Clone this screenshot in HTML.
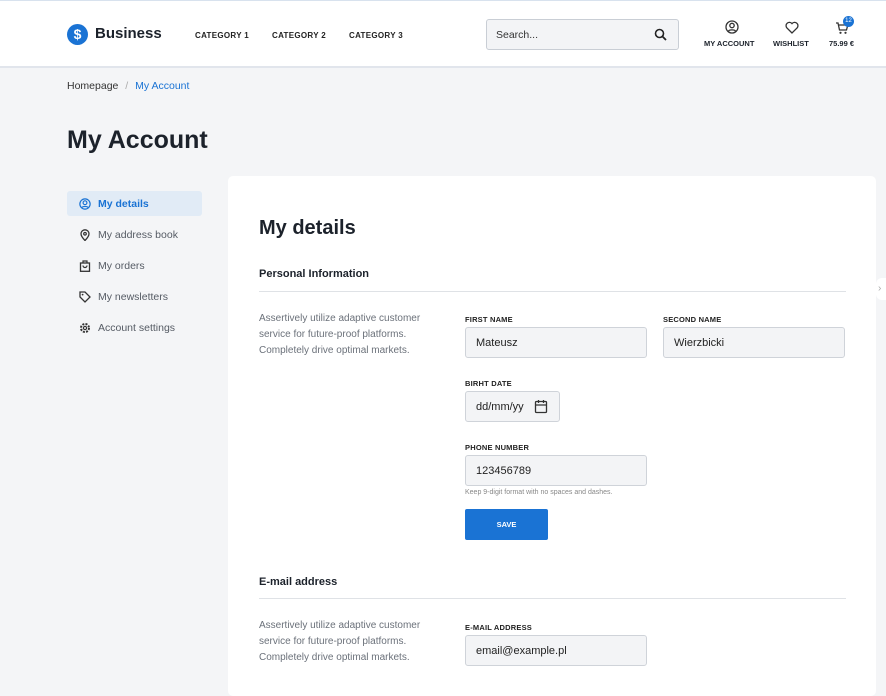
<!DOCTYPE html>
<html><head><meta charset="utf-8"><style>
*{box-sizing:border-box;margin:0;padding:0}
body{width:886px;height:683px;overflow:hidden;background:#f4f5f7;font-family:"Liberation Sans",sans-serif;color:#1c222b;position:relative}
.hdr{position:absolute;left:0;top:0;width:886px;height:68px;background:#fff;border-top:1px solid #d8e2ee;border-bottom:2px solid #e1e5ec}
.abs{position:absolute}
.cat{position:absolute;top:30px;font-size:8px;font-weight:bold;letter-spacing:.3px;color:#222}
.lbl{position:absolute;font-size:7.5px;font-weight:bold;color:#222;letter-spacing:.2px}
.inp{position:absolute;background:#f3f4f6;border:1px solid #cfd3d9;border-radius:3px;font-size:11px;color:#222;padding-left:10px;display:flex;align-items:center}
.nav{position:absolute;left:67px;width:135px;height:25px;display:flex;align-items:center;font-size:10.5px;color:#555b64}
.nav svg{margin:0 7px 0 12px}
.desc{position:absolute;left:259px;font-size:10px;line-height:16px;color:#6b717a}
</style></head><body>
<div class="hdr">
<div class="abs" style="left:67px;top:23px;width:21px;height:21px;border-radius:50%;background:#1a73d4;color:#fff;font-weight:bold;font-size:14px;text-align:center;line-height:21px">$</div>
<div class="abs" style="left:95px;top:24px;font-size:15px;font-weight:bold;color:#1c222b">Business</div>
<div class="cat" style="left:195px">CATEGORY 1</div>
<div class="cat" style="left:272px">CATEGORY 2</div>
<div class="cat" style="left:349px">CATEGORY 3</div>
<div class="abs" style="left:486px;top:18px;width:193px;height:31px;background:#f3f4f6;border:1px solid #c9ced5;border-radius:3px;font-size:10.5px;color:#333;padding:9px 0 0 9px">Search...</div>
<svg class="abs" style="left:654px;top:27px" width="13" height="13" viewBox="0 0 13 13"><circle cx="5.5" cy="5.5" r="4" fill="none" stroke="#222" stroke-width="1.6"/><path d="M8.5 8.5l3.5 3.5" stroke="#222" stroke-width="1.8"/></svg>
<svg class="abs" style="left:725px;top:19px" width="14" height="14" viewBox="0 0 14 14"><circle cx="7" cy="7" r="6" fill="none" stroke="#333" stroke-width="1.3"/><circle cx="7" cy="5.5" r="2.2" fill="none" stroke="#333" stroke-width="1.3"/><path d="M3.3 11.2c1-1.8 6.4-1.8 7.4 0" fill="none" stroke="#333" stroke-width="1.3"/></svg>
<div class="abs" style="left:704px;top:38px;font-size:7.5px;font-weight:bold">MY ACCOUNT</div>
<svg class="abs" style="left:785px;top:20px" width="14" height="13" viewBox="0 0 14 13"><path d="M7 12L1.8 6.8A3 3 0 0 1 7 2.6a3 3 0 0 1 5.2 4.2z" fill="none" stroke="#333" stroke-width="1.3"/></svg>
<div class="abs" style="left:773px;top:38px;font-size:7.5px;font-weight:bold">WISHLIST</div>
<svg class="abs" style="left:835px;top:20px" width="14" height="14" viewBox="0 0 14 14"><path d="M1 2h2l1.5 7h7l1.3-5H4" fill="none" stroke="#333" stroke-width="1.3"/><circle cx="5.5" cy="11.8" r="1.1" fill="#333"/><circle cx="10.5" cy="11.8" r="1.1" fill="#333"/></svg>
<div class="abs" style="left:843px;top:15px;width:11px;height:11px;border-radius:50%;background:#1a73d4;color:#fff;font-size:6px;text-align:center;line-height:11px">12</div>
<div class="abs" style="left:829px;top:38px;font-size:7.5px;font-weight:bold">75.99 €</div>
</div>
<div class="abs" style="left:67px;top:80px;font-size:10.5px;color:#333">Homepage <span style="color:#aaa;margin:0 4px">/</span> <span style="color:#1a73d4">My Account</span></div>
<div class="abs" style="left:67px;top:126px;font-size:25px;font-weight:bold;color:#1c222b">My Account</div>

<div class="nav" style="top:191px;background:#e1ebf6;border-radius:3px;color:#1a73d4;font-weight:bold"><svg width="12" height="12" viewBox="0 0 14 14"><circle cx="7" cy="7" r="6" fill="none" stroke="#1a73d4" stroke-width="1.4"/><circle cx="7" cy="5.5" r="2.2" fill="none" stroke="#1a73d4" stroke-width="1.4"/><path d="M3.3 11.2c1-1.8 6.4-1.8 7.4 0" fill="none" stroke="#1a73d4" stroke-width="1.4"/></svg>My details</div>
<div class="nav" style="top:222px"><svg width="12" height="12" viewBox="0 0 12 12"><path d="M6 11.5S2 7.5 2 4.8a4 4 0 0 1 8 0c0 2.7-4 6.7-4 6.7z" fill="none" stroke="#333" stroke-width="1.3"/><circle cx="6" cy="4.8" r="1.3" fill="none" stroke="#333" stroke-width="1.2"/></svg>My address book</div>
<div class="nav" style="top:253px"><svg width="12" height="12" viewBox="0 0 12 12"><rect x="1.5" y="3" width="9" height="8.3" fill="none" stroke="#333" stroke-width="1.3"/><path d="M4 3V1h4v2M4 5.5a2 2 0 0 0 4 0" fill="none" stroke="#333" stroke-width="1.2"/></svg>My orders</div>
<div class="nav" style="top:284px"><svg width="12" height="12" viewBox="0 0 12 12"><path d="M1 1h5l5 5-5 5-5-5z" fill="none" stroke="#333" stroke-width="1.3"/><circle cx="3.6" cy="3.6" r=".9" fill="#333"/></svg>My newsletters</div>
<div class="nav" style="top:315px"><svg width="12" height="12" viewBox="0 0 12 12"><circle cx="6" cy="6" r="4" fill="none" stroke="#333" stroke-width="2" stroke-dasharray="2 1.2"/><circle cx="6" cy="6" r="1.6" fill="none" stroke="#333" stroke-width="1.2"/></svg>Account settings</div>

<div class="abs" style="left:228px;top:176px;width:648px;height:520px;background:#fff;border-radius:5px"></div>
<div class="abs" style="left:876px;top:278px;width:10px;height:22px;background:#fff;border-radius:6px 0 0 6px;color:#aaa;font-size:10px;line-height:22px;padding-left:2px">›</div>
<div class="abs" style="left:259px;top:217px;font-size:20px;font-weight:bold">My details</div>
<div class="abs" style="left:259px;top:268px;font-size:11px;font-weight:bold">Personal Information</div>
<div class="abs" style="left:259px;top:291px;width:587px;height:1px;background:#dfe2e6"></div>
<div class="desc" style="top:311px">Assertively utilize adaptive customer<br>service for future-proof platforms.<br>Completely drive optimal markets.</div>
<div class="lbl" style="left:465px;top:315px">FIRST NAME</div>
<div class="inp" style="left:465px;top:327px;width:182px;height:31px">Mateusz</div>
<div class="lbl" style="left:663px;top:315px">SECOND NAME</div>
<div class="inp" style="left:663px;top:327px;width:182px;height:31px">Wierzbicki</div>
<div class="lbl" style="left:465px;top:379px">BIRHT DATE</div>
<div class="inp" style="left:465px;top:391px;width:95px;height:31px">dd/mm/yy</div>
<svg class="abs" style="left:534px;top:399px" width="14" height="15" viewBox="0 0 14 15"><rect x="1.5" y="2.5" width="11" height="11" rx="1" fill="none" stroke="#333" stroke-width="1.3"/><path d="M1.5 6h11M4.5 1v3M9.5 1v3" stroke="#333" stroke-width="1.3"/></svg>
<div class="lbl" style="left:465px;top:443px">PHONE NUMBER</div>
<div class="inp" style="left:465px;top:455px;width:182px;height:31px">123456789</div>
<div class="abs" style="left:465px;top:489px;font-size:7px;color:#888">Keep 9-digit format with no spaces and dashes.</div>
<div class="abs" style="left:465px;top:509px;width:83px;height:31px;background:#1a73d4;border-radius:2px;color:#fff;font-size:7.5px;font-weight:bold;text-align:center;line-height:31px">SAVE</div>
<div class="abs" style="left:259px;top:576px;font-size:11px;font-weight:bold">E-mail address</div>
<div class="abs" style="left:259px;top:598px;width:587px;height:1px;background:#dfe2e6"></div>
<div class="desc" style="top:618px">Assertively utilize adaptive customer<br>service for future-proof platforms.<br>Completely drive optimal markets.</div>
<div class="lbl" style="left:465px;top:623px">E-MAIL ADDRESS</div>
<div class="inp" style="left:465px;top:635px;width:182px;height:31px">email@example.pl</div>
</body></html>
